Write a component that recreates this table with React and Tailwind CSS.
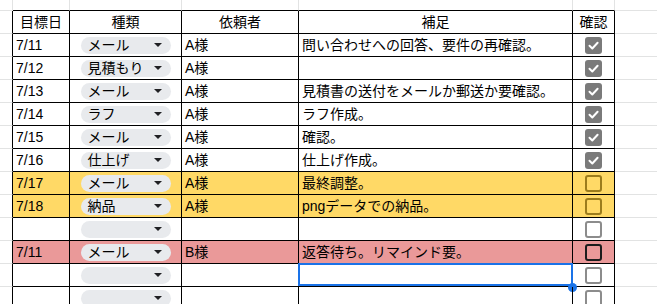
import React from 'react'

const rows = [
  { date: '7/11', kind: 'メール', who: 'A様', note: '問い合わせへの回答、要件の再確認。', done: true },
  { date: '7/12', kind: '見積もり', who: 'A様', note: '', done: true },
  { date: '7/13', kind: 'メール', who: 'A様', note: '見積書の送付をメールか郵送か要確認。', done: true },
  { date: '7/14', kind: 'ラフ', who: 'A様', note: 'ラフ作成。', done: true },
  { date: '7/15', kind: 'メール', who: 'A様', note: '確認。', done: true },
  { date: '7/16', kind: '仕上げ', who: 'A様', note: '仕上げ作成。', done: true },
  { date: '7/17', kind: 'メール', who: 'A様', note: '最終調整。', done: false, tone: 'yellow' },
  { date: '7/18', kind: '納品', who: 'A様', note: 'pngデータでの納品。', done: false, tone: 'yellow' },
  { date: '', kind: '', who: '', note: '', done: false },
  { date: '7/11', kind: 'メール', who: 'B様', note: '返答待ち。リマインド要。', done: false, tone: 'red' },
  { date: '', kind: '', who: '', note: '', done: false, selected: true },
  { date: '', kind: '', who: '', note: '', done: false },
]

const toneBg = {
  yellow: 'bg-[#ffd966]',
  red: 'bg-[#ea9999]',
}

const Chip = ({ label }) => (
  <div className="mx-auto flex h-[17px] w-[90px] items-center justify-between rounded-full bg-[#e8eaed] pl-[7px] pr-[9px]">
    <span className="leading-none">{label}</span>
    <svg width="8" height="4" viewBox="0 0 8 4">
      <path d="M0 0 L8 0 L4 4 Z" fill="#202124" />
    </svg>
  </div>
)

const Checkbox = ({ done, tone }) => {
  if (done) {
    return (
      <div className="mx-auto flex h-[17px] w-[17px] items-center justify-center rounded-[3px] bg-[#7a7a7a]">
        <svg width="13" height="13" viewBox="0 0 13 13">
          <path d="M2.5 6.8 L5.3 9.5 L10.6 3.8" fill="none" stroke="#fff" strokeWidth="2" strokeLinecap="round" strokeLinejoin="round" />
        </svg>
      </div>
    )
  }
  const border =
    tone === 'yellow' ? 'border-[#9c7c1c]' : tone === 'red' ? 'border-[#1c1c1c]' : 'border-[#8c8c8c]'
  return <div className={`mx-auto h-[17px] w-[17px] rounded-[3px] border-2 ${border}`} />
}

const cell = 'h-[23px] border-r border-b border-black flex items-center'
const edge = 'h-[23px] border-r border-b border-[#e2e3e3]'

const App = () => {
  return (
    <div className="h-[304px] w-[657px] overflow-hidden bg-white font-['Liberation_Sans','Noto_Sans_CJK_JP',sans-serif] text-[14px] text-black">
      <div className="grid grid-cols-[13px_57px_112px_117px_274px_42px_43px]">
        {/* blank row above the table */}
        <div className="h-[11px] border-r border-b border-[#e2e3e3]" />
        <div className="h-[11px] border-r border-[#e2e3e3] border-b-black border-b" />
        <div className="h-[11px] border-r border-[#e2e3e3] border-b-black border-b" />
        <div className="h-[11px] border-r border-[#e2e3e3] border-b-black border-b" />
        <div className="h-[11px] border-r border-[#e2e3e3] border-b-black border-b" />
        <div className="h-[11px] border-r border-[#e2e3e3] border-b-black border-b" />
        <div className="h-[11px] border-r border-b border-[#e2e3e3]" />

        {/* header */}
        <div className="h-[23px] border-b border-r border-[#e2e3e3] border-r-black" />
        <div className={`${cell} justify-center`}>目標日</div>
        <div className={`${cell} justify-center`}>種類</div>
        <div className={`${cell} justify-center`}>依頼者</div>
        <div className={`${cell} justify-center`}>補足</div>
        <div className={`${cell} justify-center`}>確認</div>
        <div className={edge} />

        {rows.map((r, i) => {
          const bg = r.tone ? toneBg[r.tone] : ''
          return (
            <React.Fragment key={i}>
              <div className="h-[23px] border-b border-r border-[#e2e3e3] border-r-black" />
              <div className={`${cell} ${bg} pl-[3px]`}>{r.date}</div>
              <div className={`${cell} ${bg}`}>
                <Chip label={r.kind} />
              </div>
              <div className={`${cell} ${bg} pl-[3px]`}>{r.who}</div>
              <div className={`${cell} ${bg} relative pl-[3px]`}>
                {r.note}
                {r.selected && (
                  <>
                    <div className="absolute -top-[1px] -left-[1px] -right-[1px] bottom-0 border-2 border-[#1a73e8]" />
                    <div className="absolute -right-[5px] -bottom-[6px] h-[9px] w-[9px] rounded-full bg-[#1a73e8]" />
                  </>
                )}
              </div>
              <div className={`${cell} ${bg}`}>
                <Checkbox done={r.done} tone={r.tone} />
              </div>
              <div className={edge} />
            </React.Fragment>
          )
        })}
      </div>
    </div>
  )
}

export default App
